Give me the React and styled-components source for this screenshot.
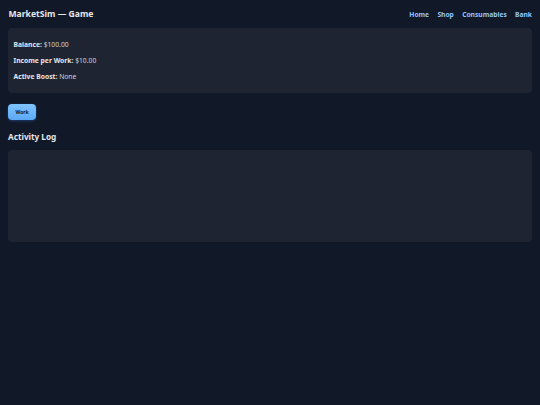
import React from "react";
import styled, { createGlobalStyle } from "styled-components";

const Global = createGlobalStyle`
  html, body { margin: 0; padding: 0; background: #111827; }
  body { font-family: "Noto Sans", "Open Sans", sans-serif; color: #e5e7eb; }
`;

const Page = styled.div`
  padding: 0 8px 8px 8px;
  min-height: 405px;
  box-sizing: border-box;
  background: #111827;
`;

const Header = styled.header`
  display: flex;
  align-items: center;
  justify-content: space-between;
  height: 28px;
`;

const Title = styled.h1`
  margin: 0 0 0 0.5px;
  font-size: 8.6px;
  font-weight: 700;
  color: #e5e7eb;
`;

const Nav = styled.nav`
  display: flex;
  gap: 8.3px;
`;

const NavLink = styled.a`
  font-size: 6.7px;
  font-weight: 700;
  color: #93c5fd;
  text-decoration: none;
`;

const Card = styled.section`
  background: #1e2431;
  border-radius: 4px;
  padding: ${(p) => p.$pad || "8.5px 5.5px"};
  height: ${(p) => p.$height || "auto"};
  box-sizing: border-box;
`;

const Row = styled.p`
  margin: 0;
  height: 16px;
  line-height: 16px;
  font-size: 6.75px;
  color: #d1d5db;
`;

const Label = styled.strong`
  font-weight: 700;
  color: #e5e7eb;
`;

const WorkButton = styled.button`
  margin-top: 11px;
  width: 28px;
  height: 16px;
  padding: 0;
  border: none;
  border-radius: 4px;
  background: linear-gradient(180deg, #80c4ff 0%, #5ba8f6 100%);
  box-shadow: 0 1px 3px rgba(59, 130, 246, 0.35);
  font-family: inherit;
  font-size: 5px;
  font-weight: 700;
  color: #0f172a;
  cursor: pointer;
  display: block;
`;

const SectionTitle = styled.h2`
  margin: 0;
  height: 30px;
  line-height: 33px;
  font-size: 8.2px;
  font-weight: 700;
  color: #e5e7eb;
`;

export default function App() {
  return (
    <>
      <Global />
      <Page>
        <Header>
          <Title>MarketSim — Game</Title>
          <Nav>
            <NavLink href="#">Home</NavLink>
            <NavLink href="#">Shop</NavLink>
            <NavLink href="#">Consumables</NavLink>
            <NavLink href="#">Bank</NavLink>
          </Nav>
        </Header>
        <Card>
          <Row><Label>Balance:</Label> $100.00</Row>
          <Row><Label>Income per Work:</Label> $10.00</Row>
          <Row><Label>Active Boost:</Label> None</Row>
        </Card>
        <WorkButton>Work</WorkButton>
        <SectionTitle>Activity Log</SectionTitle>
        <Card $height="92px" />
      </Page>
    </>
  );
}
